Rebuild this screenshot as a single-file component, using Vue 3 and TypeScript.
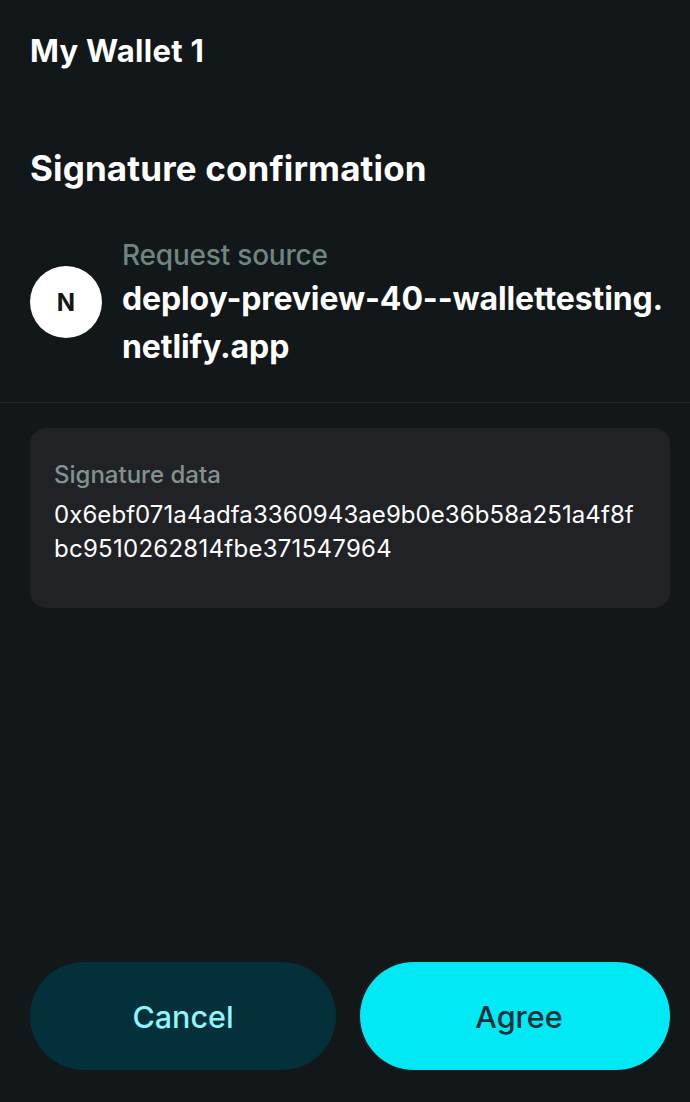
<script setup lang="ts">
const wallet: string = 'My Wallet 1'
</script>

<template>
  <div class="page">
    <header class="wallet">{{ wallet }}</header>
    <h1 class="title">Signature confirmation</h1>
    <section class="source">
      <div class="avatar">N</div>
      <div class="source-text">
        <div class="source-label">Request source</div>
        <div class="source-url">deploy-preview-40--wallettesting.<br />netlify.app</div>
      </div>
    </section>
    <section class="data-card">
      <div class="data-label">Signature data</div>
      <div class="data-value">
        <div class="data-line">0x6ebf071a4adfa3360943ae9b0e36b58a251a4f8f</div>
        <div class="data-line wide">bc9510262814fbe371547964</div>
      </div>
    </section>
    <footer class="actions">
      <button class="btn cancel">Cancel</button>
      <button class="btn agree">Agree</button>
    </footer>
  </div>
</template>

<style>
html, body { margin: 0; background: #121719; }
</style>

<style scoped>
.page {
  width: 690px;
  height: 1102px;
  box-sizing: border-box;
  background: #121719;
  font-family: Inter, "Liberation Sans", sans-serif;
  color: #fff;
  display: flex;
  flex-direction: column;
  overflow: hidden;
}
.wallet {
  font-size: 31px;
  font-weight: 700;
  line-height: 40px;
  letter-spacing: 0.3px;
  margin: 31px 0 0 30px;
}
.title {
  font-size: 35px;
  font-weight: 700;
  line-height: 44px;
  letter-spacing: 0.14px;
  margin: 75px 0 0 30px;
}
.source {
  display: flex;
  align-items: center;
  gap: 20px;
  padding: 0 0 31px 30px;
  margin-top: 45px;
  border-bottom: 1px solid #23282a;
}
.avatar {
  width: 72px;
  height: 72px;
  margin-bottom: 2px;
  border-radius: 50%;
  background: #fff;
  color: #121719;
  font-size: 24px;
  font-weight: 700;
  display: flex;
  align-items: center;
  justify-content: center;
  flex: none;
}
.source-label {
  font-size: 28px;
  font-weight: 500;
  line-height: 40px;
  letter-spacing: -0.2px;
  color: #6f8580;
}
.source-url {
  font-size: 32px;
  font-weight: 700;
  line-height: 48px;
  letter-spacing: -0.12px;
  white-space: nowrap;
}
.data-card {
  margin: 25px 20px 0 30px;
  height: 180px;
  box-sizing: border-box;
  background: #212226;
  border-radius: 16px;
  padding: 30px 24px;
}
.data-label {
  font-size: 24px;
  font-weight: 500;
  line-height: 34px;
  color: #82938f;
}
.data-value {
  font-size: 24px;
  line-height: 34px;
  margin-top: 6px;
  white-space: nowrap;
}
.data-line {
  letter-spacing: 0.07px;
}
.data-line.wide {
  letter-spacing: 0.27px;
}
.actions {
  margin-top: auto;
  display: flex;
  gap: 24px;
  padding: 0 20px 32px 30px;
}
.btn {
  height: 108px;
  border: none;
  border-radius: 54px;
  font-family: inherit;
  font-size: 30.5px;
  font-weight: 500;
}
.cancel {
  width: 306px;
  background: #03303a;
  color: #8ef7fb;
}
.agree {
  width: 310px;
  padding: 0 0 0 8px;
  background: #00e9f5;
  color: #0f3038;
}
</style>
